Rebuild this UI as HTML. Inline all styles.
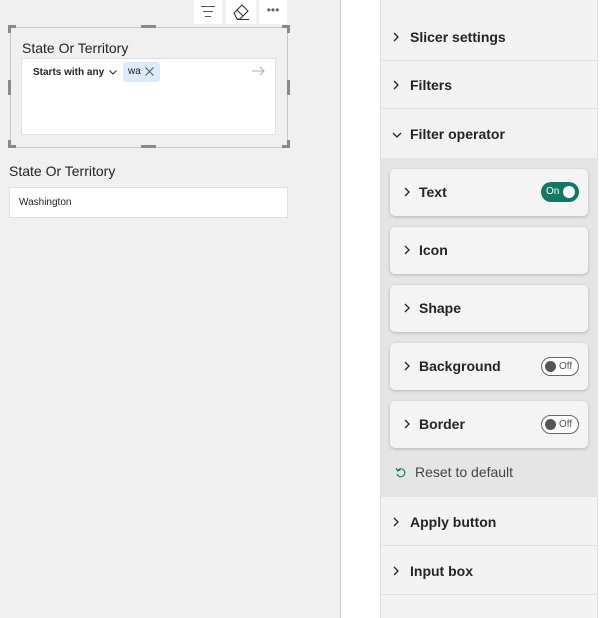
<!DOCTYPE html>
<html><head><style>
*{margin:0;padding:0;box-sizing:border-box}
body{width:606px;height:618px;overflow:hidden;background:#fff;font-family:"Segoe UI","Liberation Sans",sans-serif;color:#252423;position:relative}
.abs{position:absolute}
.left{left:0;top:0;width:341px;height:618px;background:#f0f0f0;border-right:1px solid #c8c8c8}
.tb{top:0;height:24px;width:28px;background:#fff}
.panel{left:380px;top:0;width:218px;height:618px;background:#f3f3f3;border-left:1px solid #e0e0e0;border-right:1px solid #e0e0e0}
.sec{left:381px;width:217px;height:48px;border-bottom:1px solid #e1e1e1;font-size:14px;font-weight:600;padding-left:29px;line-height:48px}
.chev{position:absolute;left:12px;top:19px;width:6px;height:10px}
.group{left:381px;top:158px;width:217px;height:339px;background:#e5e5e5}
.card{left:390px;width:198px;height:47px;background:#f4f4f4;border-radius:5px;box-shadow:0 1px 3px rgba(0,0,0,.22);font-size:14px;font-weight:600;line-height:47px;padding-left:29px}
.card .chev{left:14px;top:18px}
.off{position:absolute;right:9px;top:14px;width:38px;height:19px;border:1px solid #666;border-radius:10px;background:#fff;font-size:10px;font-weight:400;line-height:17px;padding-left:17px;color:#555}
.off:before{content:"";position:absolute;left:3px;top:3px;width:11px;height:11px;border-radius:50%;background:#555}
.h{background:#8a8a8a}
</style></head><body>
<svg width="0" height="0" style="position:absolute"><defs><symbol id="cr" viewBox="0 0 6 10"><path d="M1 1 L5 5 L1 9" fill="none" stroke="#252423" stroke-width="1.3"/></symbol></defs></svg>
<div class="abs left"></div>
<div class="abs tb" style="left:194px"><svg width="28" height="24"><g stroke="#555" stroke-width="1"><line x1="7" y1="6.5" x2="21" y2="6.5"/><line x1="9" y1="11.5" x2="19" y2="11.5"/><line x1="11" y1="16.5" x2="17" y2="16.5"/></g></svg></div>
<div class="abs tb" style="left:226px;width:30px"><svg width="30" height="24"><g fill="none" stroke="#333" stroke-width="1.1"><path d="M8 13 L16 5 L22 11 L14 19 L11 19 Z"/><line x1="11" y1="10" x2="17" y2="16"/><line x1="11" y1="19.5" x2="23" y2="19.5"/></g></svg></div>
<div class="abs tb" style="left:259px;width:28px;text-align:center;font-size:12px;color:#666;line-height:20px">•••</div>
<div class="abs" style="left:10px;top:27px;width:278px;height:121px;border:1px solid #c8c8c8"></div>
<div class="abs h" style="left:8px;top:25px;width:8px;height:3px"></div><div class="abs h" style="left:8px;top:25px;width:3px;height:8px"></div>
<div class="abs h" style="left:282px;top:25px;width:8px;height:3px"></div><div class="abs h" style="left:287px;top:25px;width:3px;height:8px"></div>
<div class="abs h" style="left:8px;top:145px;width:8px;height:3px"></div><div class="abs h" style="left:8px;top:140px;width:3px;height:8px"></div>
<div class="abs h" style="left:282px;top:145px;width:8px;height:3px"></div><div class="abs h" style="left:287px;top:140px;width:3px;height:8px"></div>
<div class="abs h" style="left:141px;top:25px;width:15px;height:3px"></div><div class="abs h" style="left:141px;top:145px;width:15px;height:3px"></div>
<div class="abs h" style="left:8px;top:80px;width:3px;height:15px"></div><div class="abs h" style="left:287px;top:80px;width:3px;height:15px"></div>
<div class="abs" style="left:22px;top:40px;font-size:14px">State Or Territory</div>
<div class="abs" style="left:21px;top:58px;width:255px;height:77px;background:#fff;border:1px solid #e0e0e0"></div>
<div class="abs" style="left:33px;top:67px;font-size:10px;font-weight:700">Starts with any</div>
<svg class="abs" style="left:109px;top:70px" width="8" height="5"><path d="M0.5 0.5 L4 4 L7.5 0.5" fill="none" stroke="#252423" stroke-width="1"/></svg>
<div class="abs" style="left:123px;top:62px;width:37px;height:20px;background:#ddeafa;border-radius:3px;font-size:10px;line-height:20px;padding-left:5px">wa</div>
<svg class="abs" style="left:145px;top:67px" width="9" height="9"><path d="M0.5 0.5 L8.5 8.5 M8.5 0.5 L0.5 8.5" stroke="#555" stroke-width="1"/></svg>
<svg class="abs" style="left:252px;top:66px" width="13" height="10"><path d="M0 5 H12 M8 1 L12 5 L8 9" fill="none" stroke="#aaa" stroke-width="1"/></svg>
<div class="abs" style="left:9px;top:163px;font-size:14px">State Or Territory</div>
<div class="abs" style="left:9px;top:187px;width:279px;height:31px;background:#fff;border:1px solid #e0e0e0;font-size:10px;line-height:30px;padding-left:9px">Washington</div>

<div class="abs panel"></div>
<div class="abs sec" style="top:13px"><svg class="chev"><use href="#cr"/></svg>Slicer settings</div>
<div class="abs sec" style="top:61px"><svg class="chev"><use href="#cr"/></svg>Filters</div>
<div class="abs sec" style="top:110px;border:none"><svg class="abs" style="left:11px;top:22px" width="10" height="6"><path d="M1 1 L5 5 L9 1" fill="none" stroke="#252423" stroke-width="1.3"/></svg>Filter operator</div>
<div class="abs group"></div>
<div class="abs card" style="top:169px"><svg class="chev"><use href="#cr"/></svg>Text<div style="position:absolute;left:151px;top:13px;width:38px;height:20px;border-radius:10px;background:#117865;color:#fff;font-size:10px;font-weight:400;line-height:20px;padding-left:5px">On<span style="position:absolute;right:4px;top:4px;width:12px;height:12px;border-radius:50%;background:#fff"></span></div></div>
<div class="abs card" style="top:227px"><svg class="chev"><use href="#cr"/></svg>Icon</div>
<div class="abs card" style="top:285px"><svg class="chev"><use href="#cr"/></svg>Shape</div>
<div class="abs card" style="top:343px"><svg class="chev"><use href="#cr"/></svg>Background<div class="off">Off</div></div>
<div class="abs card" style="top:401px"><svg class="chev"><use href="#cr"/></svg>Border<div class="off">Off</div></div>
<svg class="abs" style="left:395px;top:467px" width="11" height="11"><path d="M2.5 3.5 A4 4 0 1 1 2 7" fill="none" stroke="#117865" stroke-width="1.1"/><path d="M1 1 L2.5 4 L5.5 3" fill="none" stroke="#117865" stroke-width="1.1"/></svg>
<div class="abs" style="left:415px;top:464px;font-size:14px;color:#444">Reset to default</div>
<div class="abs sec" style="top:498px"><svg class="chev"><use href="#cr"/></svg>Apply button</div>
<div class="abs sec" style="top:547px"><svg class="chev"><use href="#cr"/></svg>Input box</div>
</body></html>
